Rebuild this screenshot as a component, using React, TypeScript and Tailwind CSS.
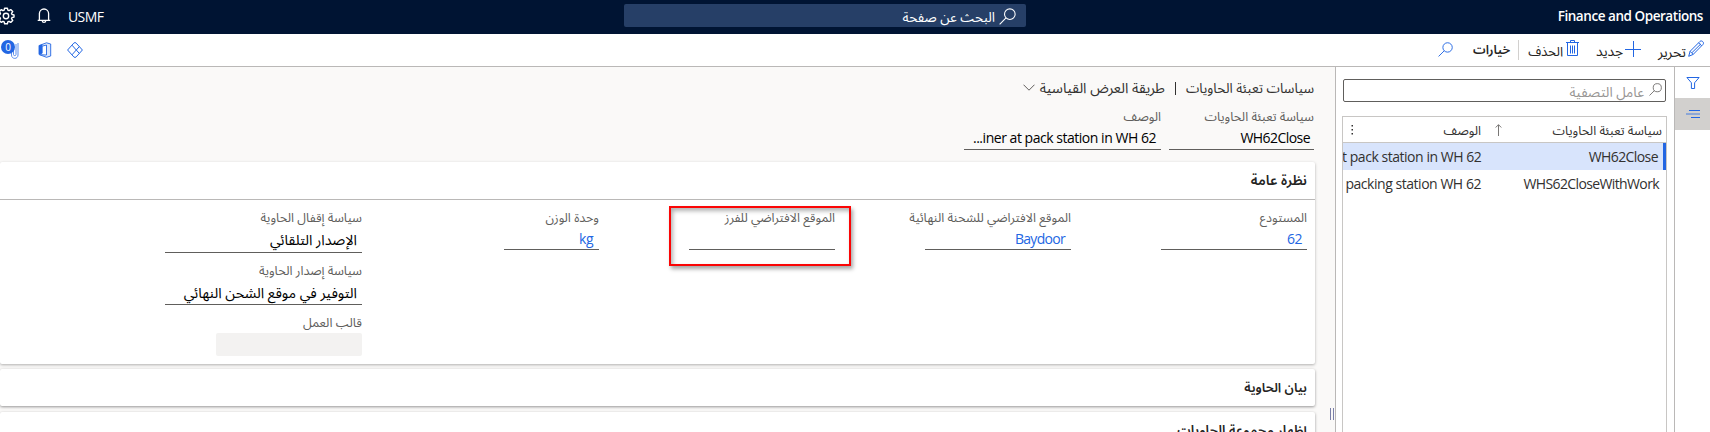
import React from 'react';
import clsx from 'clsx';

function Latin({ children, className = 'tracking-[-0.62px]' }: { children: React.ReactNode; className?: string }) {
  return (
    <span dir="ltr" className={clsx('text-[14px] whitespace-nowrap', className)}>
      {children}
    </span>
  );
}

function SearchIcon({ size, className }: { size: number; className?: string }) {
  return (
    <svg width={size} height={size} viewBox="0 0 16 16" fill="none" stroke="currentColor" className={clsx('shrink-0', className)}>
      <circle cx="10.2" cy="5.8" r="5" />
      <path d="M6.6 9.4L.6 15.4" />
    </svg>
  );
}

function GearIcon() {
  return (
    <svg width="18" height="18" viewBox="0 0 18 18" fill="none" stroke="currentColor" strokeWidth="1.4" strokeLinejoin="round" className="shrink-0">
      <path d="M7.6 1.2h2.8l.4 2 1.2.5 1.7-1.1 2 2-1.2 1.7.5 1.2 2 .4v2.2l-2 .4-.5 1.2 1.2 1.7-2 2-1.7-1.1-1.2.5-.4 2H7.6l-.4-2-1.2-.5-1.7 1.1-2-2 1.2-1.7-.5-1.2-2-.4V7.9l2-.4.5-1.2-1.2-1.7 2-2L6 3.7l1.2-.5z" />
      <circle cx="9" cy="9" r="2.7" />
    </svg>
  );
}

function BellIcon() {
  return (
    <svg width="14" height="16" viewBox="0 0 14 16" fill="none" stroke="currentColor" strokeWidth="1.3" className="shrink-0">
      <path d="M.7 12.4h12.6M2.4 12.4V5.6a4.6 4.6 0 0 1 9.2 0v6.8M5.2 12.6c.2 2.4 3.4 2.4 3.6 0" />
    </svg>
  );
}

function Field({ label, children, size }: { label: string; children?: React.ReactNode; size: string }) {
  return (
    <div className={clsx('flex flex-col', size)}>
      <div className="h-5 text-[12.6px] leading-5 whitespace-nowrap text-[#605e5c]">{label}</div>
      {children}
    </div>
  );
}

function Line({ children, className }: { children?: React.ReactNode; className: string }) {
  return <div className={clsx('flex items-center border-b border-[#605e5c]', className)}>{children}</div>;
}

function TopBar() {
  return (
    <header className="flex h-[34px] shrink-0 items-center bg-[#001433] text-white">
      <div className="flex w-[684px] shrink-0 pr-[7px] pb-[2px]">
        <span dir="ltr" className="text-[13.5px] font-semibold tracking-[-0.45px]">Finance and Operations</span>
      </div>
      <div className="mb-[4px] flex h-[23px] w-[402px] shrink-0 items-center gap-1 rounded-[2px] bg-[#263f67] pr-[10px]">
        <SearchIcon size={17} className="relative top-px" />
        <span className="relative top-[2px] text-[13.5px] leading-[23px]">البحث عن صفحة</span>
      </div>
      <div className="flex grow items-center justify-end gap-[14px] pb-[2px]">
        <Latin className="tracking-[-0.6px]">USMF</Latin>
        <div className="flex w-[54px] items-center justify-end gap-[22px]">
          <BellIcon />
          <span className="-ml-[3px]"><GearIcon /></span>
        </div>
      </div>
    </header>
  );
}

function Toolbar() {
  return (
    <div className="flex h-[33px] shrink-0 items-center border-b border-[#bab8b7] bg-white pb-px text-[14px] text-[#252423]">
      <div className="flex items-center gap-[2px] pr-[6px]">
        <svg width="16" height="17" viewBox="0 0 16 17" fill="none" stroke="#2266e3" className="mb-[2px] shrink-0">
          <path d="M.7 16.3l1.4-5L12 1.4c1.7-1.6 4.7 1.2 3 3L5.2 14.4zM2.1 11.3l3.1 3.1M10.6 2.8l3.1 3.1M4 12.6L13 3.8" />
        </svg>
        <span className="relative top-[2px]">تحرير</span>
      </div>
      <div className="mr-[17px] flex items-center gap-[2px]">
        <svg width="16" height="16" viewBox="0 0 16 16" fill="none" stroke="#2266e3" className="mb-[2px] shrink-0">
          <path d="M0 8.5h16M8.5 0v16" />
        </svg>
        <span className="relative top-[2px] text-[13.8px]">جديد</span>
      </div>
      <div className="mr-[17px] flex items-center gap-[3px]">
        <svg width="13" height="16" viewBox="0 0 13 16" fill="none" stroke="#2266e3" className="mb-[2px] shrink-0">
          <path d="M0 2.5h13M4.500 2V.5h4V2M1.500 3v12.500h10V3M4.500 5.500v8M6.500 5.500v8M8.500 5.500v8" />
        </svg>
        <span className="relative top-[2px] text-[13.2px]">الحذف</span>
      </div>
      <div className="mr-[9px] h-5 w-px bg-[#d2d0ce]" />
      <span className="relative top-[1px] mr-[8px] text-[12.6px] font-semibold">خيارات</span>
      <SearchIcon size={15} className="mr-[20px] text-[#2266e3]" />
      <div className="flex grow items-center justify-end">
        <svg width="16" height="16" viewBox="0 0 16 16" fill="none" stroke="#2266e3">
          <path d="M6.8 1.1a1.7 1.7 0 0 1 2.400 0L15.400 8 9.200 14.900a1.700 1.700 0 0 1-2.400 0L.6 8z" />
          <path d="M5 3.200L12.300 11.400M12.300 4.600L5 12.800" />
        </svg>
        <svg width="14" height="16" viewBox="0 0 14 16" fill="none" className="mr-[15px]">
          <path d="M8.500.8L12.700 2v12l-4.200 1.300L1.500 12.700l7 .3V3L4 4.200v7L1.200 12.300V3.500z" fill="#2266e3" fillOpacity=".15" stroke="#2266e3" strokeWidth=".9" />
          <path d="M.8 3.600L4.300 2.300v9L.8 12.600z" fill="#2266e3" />
        </svg>
        <div className="relative mr-[19px] h-[18px] w-[18px] ml-px">
          <svg width="9" height="17" viewBox="0 0 9 17" fill="none" stroke="#5b8ceb" className="absolute top-px left-[9px]">
            <path d="M1.500 6v7c0 4.500 6.500 4.500 6.500 0V1M3.500 4v8.500c0 1.500 2.500 1.500 2.500 0V2" />
          </svg>
          <div className="absolute -top-px left-0 flex h-[14px] w-[14px] items-center justify-center rounded-full bg-[#2266e3] text-[10px] leading-none text-white">0</div>
        </div>
      </div>
    </div>
  );
}

function Rail() {
  return (
    <div className="w-9 shrink-0 border-l border-[#bab8b7] bg-white">
      <div className="flex h-[31px] items-center justify-center">
        <svg width="14" height="12" viewBox="0 0 14 12" fill="none" stroke="#2266e3">
          <path d="M.9.5h12.200L8.600 5.800v5.700H5.400V5.800z" />
        </svg>
      </div>
      <div className="flex h-8 items-center justify-center bg-[#d2d0ce]">
        <svg width="14" height="9" viewBox="0 0 14 9" fill="none" stroke="#2266e3">
          <path d="M3 .5h11" />
          <path d="M0 3.500h14M0 4.500h14" strokeOpacity=".4" />
          <path d="M5 7.500h9" />
        </svg>
      </div>
    </div>
  );
}

function ListPane() {
  return (
    <div className="flex w-[338px] shrink-0 flex-col bg-white pt-3 pr-[7px] pl-[6px]">
      <div className="mx-px flex h-[23px] shrink-0 items-center gap-[5px] rounded-[2px] border border-[#605e5c] pr-[3px] text-[#605e5c]">
        <SearchIcon size={13} className="mb-[2px]" />
        <span className="relative top-[2px] text-[13.6px] text-[#979593]">عامل التصفية</span>
      </div>
      <div className="mt-[14px] grow border border-b-0 border-[#c8c6c4]">
        <div className="flex h-[26px] items-center border-b border-[#c8c6c4] pr-[4px] text-[12.6px] text-[#323130]">
          <span className="w-[160px] pt-1">سياسة تعبئة الحاويات</span>
          <svg width="7" height="12" viewBox="0 0 7 12" fill="none" stroke="#797775"><path d="M3.500 12V.7M.7 3.500L3.500.7l2.800 2.800" /></svg>
          <span className="mr-[14px] grow pt-1">الوصف</span>
          <svg width="3" height="12" viewBox="0 0 3 12" fill="#323130" className="ml-[8px]"><path d="M.5 1h1.500v1.500h-1.500zM.5 5h1.500v1.500h-1.500zM.5 9h1.500v1.500h-1.500z" /></svg>
        </div>
        <div className="flex h-[27px] items-center overflow-hidden border-r-[3px] border-[#2266e3] bg-[#d8e4fc] pr-[4px] text-[#323130]">
          <Latin className="w-[179px] shrink-0 pr-px text-right tracking-[-0.58px]">WH62Close</Latin>
          <Latin className="w-[138px] shrink-0 text-right tracking-[-0.46px]">t pack station in WH 62</Latin>
        </div>
        <div className="flex h-[27px] items-center overflow-hidden pr-[7px] text-[#323130]">
          <Latin className="w-[178px] shrink-0 text-right tracking-[-0.62px]">WHS62CloseWithWork</Latin>
          <Latin className="w-[139px] shrink-0 text-right tracking-[-0.46px]">packing station WH 62</Latin>
        </div>
      </div>
    </div>
  );
}

function Details() {
  return (
    <main className="min-w-0 grow pr-[15px] pt-[11px]">
      <div className="flex h-[20px] items-center pr-px text-[#323130]">
        <span className="text-[13.5px]">سياسات تعبئة الحاويات</span>
        <span className="mr-[10px] h-[13px] w-px bg-[#323130]" />
        <span className="mr-[10px] flex items-center gap-[5px]">
          <span className="text-[14.2px]">طريقة العرض القياسية</span>
          <svg width="12" height="7" viewBox="0 0 12 7" fill="none" stroke="#605e5c" className="mb-[2px]"><path d="M.5.7L6 6.200 11.500.7" /></svg>
        </span>
      </div>
      <div className="flex gap-[8px] pr-px pt-[9px]">
        <Field label="سياسة تعبئة الحاويات" size="w-[145px]">
          <Line className="h-[23px] pr-[4px] pb-px"><Latin className="tracking-[-0.55px]">WH62Close</Latin></Line>
        </Field>
        <Field label="الوصف" size="w-[197px]">
          <Line className="h-[23px] pr-[5px] pb-px"><Latin className="tracking-[-0.47px]">...iner at pack station in WH 62</Latin></Line>
        </Field>
      </div>
      <section className="mt-3 h-[202px] rounded-[2px] bg-white shadow-[0_1px_3px_rgba(0,0,0,0.3)]">
        <h2 className="h-[38px] border-b border-[#bab8b7] pr-[8px] text-[13.8px] leading-[36px] font-semibold text-[#252423]">نظرة عامة</h2>
        <div className="flex gap-[90px] pr-[8px] pt-[8px]">
          <Field label="المستودع" size="w-[146px]">
            <Line className="h-[22px] pr-[5px]"><Latin className="tracking-[-0.5px] text-[#2266e3]">62</Latin></Line>
          </Field>
          <Field label="الموقع الافتراضي للشحنة النهائية" size="w-[146px]">
            <Line className="h-[22px] pr-[6px]"><Latin className="tracking-[-0.7px] text-[#2266e3]">Baydoor</Latin></Line>
          </Field>
          <div className="relative">
            <Field label="الموقع الافتراضي للفرز" size="w-[146px]">
              <Line className="h-[22px]" />
            </Field>
            <div className="absolute -top-[2px] -left-[20px] h-[60px] w-[182px] border-2 border-[#fb0505] shadow-[2px_3px_4px_rgba(0,0,0,0.35),inset_2px_3px_4px_rgba(0,0,0,0.3)]" />
          </div>
          <Field label="وحدة الوزن" size="w-[147px]">
            <Line className="h-[22px] w-[95px] pr-[6px]"><Latin className="tracking-[-0.5px] text-[#2266e3]">kg</Latin></Line>
          </Field>
          <div className="flex w-[197px] flex-col gap-[8px]">
            <Field label="سياسة إقفال الحاوية" size="w-[197px]">
              <Line className="h-[25px] pr-[5px] text-[14.3px]">الإصدار التلقائي</Line>
            </Field>
            <Field label="سياسة إصدار الحاوية" size="w-[197px]">
              <Line className="h-[24px] pr-[5px] text-[14.3px]">التوفير في موقع الشحن النهائي</Line>
            </Field>
            <Field label="قالب العمل" size="w-[197px]">
              <div className="h-[23px] w-[146px] rounded-[2px] bg-[#f3f2f1]" />
            </Field>
          </div>
        </div>
      </section>
      <section className="mt-[5px] h-[37px] rounded-[2px] bg-white shadow-[0_1px_3px_rgba(0,0,0,0.4)]">
        <h2 className="pr-[8px] text-[13px] leading-[37px] font-semibold text-[#252423]">بيان الحاوية</h2>
      </section>
      <section className="mt-[6px] h-[37px] rounded-[2px] bg-white shadow-[0_1px_3px_rgba(0,0,0,0.4)]">
        <h2 className="pr-[8px] text-[13.3px] leading-[37px] font-semibold text-[#252423]">إظهار مجموعة الحاويات</h2>
      </section>
    </main>
  );
}

export default function App() {
  return (
    <div dir="rtl" className="flex h-[432px] w-[1710px] flex-col overflow-hidden bg-[#faf9f8] font-['Open_Sans','Noto_Sans_Arabic',sans-serif]">
      <TopBar />
      <Toolbar />
      <div className="flex min-h-0 grow">
        <Rail />
        <ListPane />
        <div className="flex w-[6px] shrink-0 flex-col border-r border-[#bab8b7]">
          <div className="mt-[341px] mr-px h-3 w-1 border-x border-[#7b7fa8]" />
        </div>
        <Details />
      </div>
    </div>
  );
}
